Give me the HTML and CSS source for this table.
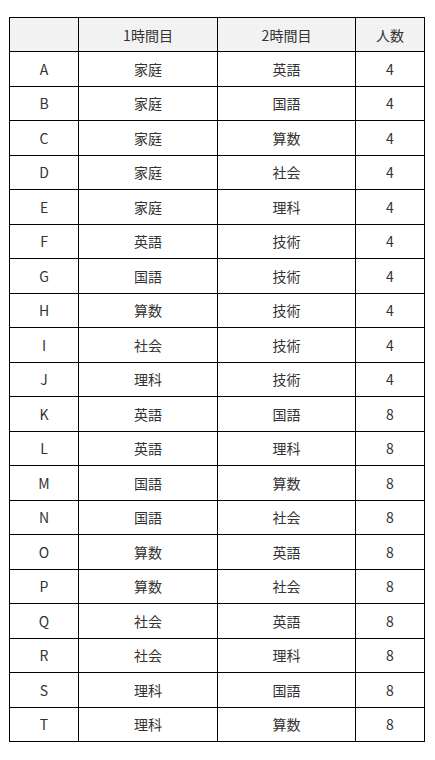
FILE: index.html
```html
<!DOCTYPE html>
<html lang="ja">
<head>
<meta charset="utf-8">
<link rel="stylesheet" href="styles.css">
</head>
<body>
<table class="grid">
  <colgroup>
    <col class="c-id"><col class="c-subj"><col class="c-subj2"><col class="c-num">
  </colgroup>
  <thead>
    <tr><th></th><th>1時間目</th><th>2時間目</th><th>人数</th></tr>
  </thead>
  <tbody>
    <tr><td>A</td><td>家庭</td><td>英語</td><td>4</td></tr>
    <tr><td>B</td><td>家庭</td><td>国語</td><td>4</td></tr>
    <tr><td>C</td><td>家庭</td><td>算数</td><td>4</td></tr>
    <tr><td>D</td><td>家庭</td><td>社会</td><td>4</td></tr>
    <tr><td>E</td><td>家庭</td><td>理科</td><td>4</td></tr>
    <tr><td>F</td><td>英語</td><td>技術</td><td>4</td></tr>
    <tr><td>G</td><td>国語</td><td>技術</td><td>4</td></tr>
    <tr><td>H</td><td>算数</td><td>技術</td><td>4</td></tr>
    <tr><td>I</td><td>社会</td><td>技術</td><td>4</td></tr>
    <tr><td>J</td><td>理科</td><td>技術</td><td>4</td></tr>
    <tr><td>K</td><td>英語</td><td>国語</td><td>8</td></tr>
    <tr><td>L</td><td>英語</td><td>理科</td><td>8</td></tr>
    <tr><td>M</td><td>国語</td><td>算数</td><td>8</td></tr>
    <tr><td>N</td><td>国語</td><td>社会</td><td>8</td></tr>
    <tr><td>O</td><td>算数</td><td>英語</td><td>8</td></tr>
    <tr><td>P</td><td>算数</td><td>社会</td><td>8</td></tr>
    <tr><td>Q</td><td>社会</td><td>英語</td><td>8</td></tr>
    <tr><td>R</td><td>社会</td><td>理科</td><td>8</td></tr>
    <tr><td>S</td><td>理科</td><td>国語</td><td>8</td></tr>
    <tr><td>T</td><td>理科</td><td>算数</td><td>8</td></tr>
  </tbody>
</table>
</body>
</html>
```

FILE: styles.css
```css
html, body {
  margin: 0;
  padding: 0;
  background: #ffffff;
}
body {
  padding: 17px 0 0 9px;
  font-family: "Noto Sans CJK JP", "Noto Sans", sans-serif;
  font-size: 14px;
  color: #333333;
}
.grid {
  border-collapse: collapse;
  table-layout: fixed;
  width: 415px;
}
.c-id { width: 69px; }
.c-subj { width: 139px; }
.c-subj2 { width: 138px; }
.c-num { width: 69px; }
.grid th, .grid td {
  border: 1px solid #000000;
  padding: 0;
  text-align: center;
  vertical-align: middle;
  font-weight: normal;
  line-height: 1;
}
.grid thead tr { height: 34px; }
.grid tbody tr { height: 34.5px; }
.grid th {
  background: #f2f2f2;
}
```
